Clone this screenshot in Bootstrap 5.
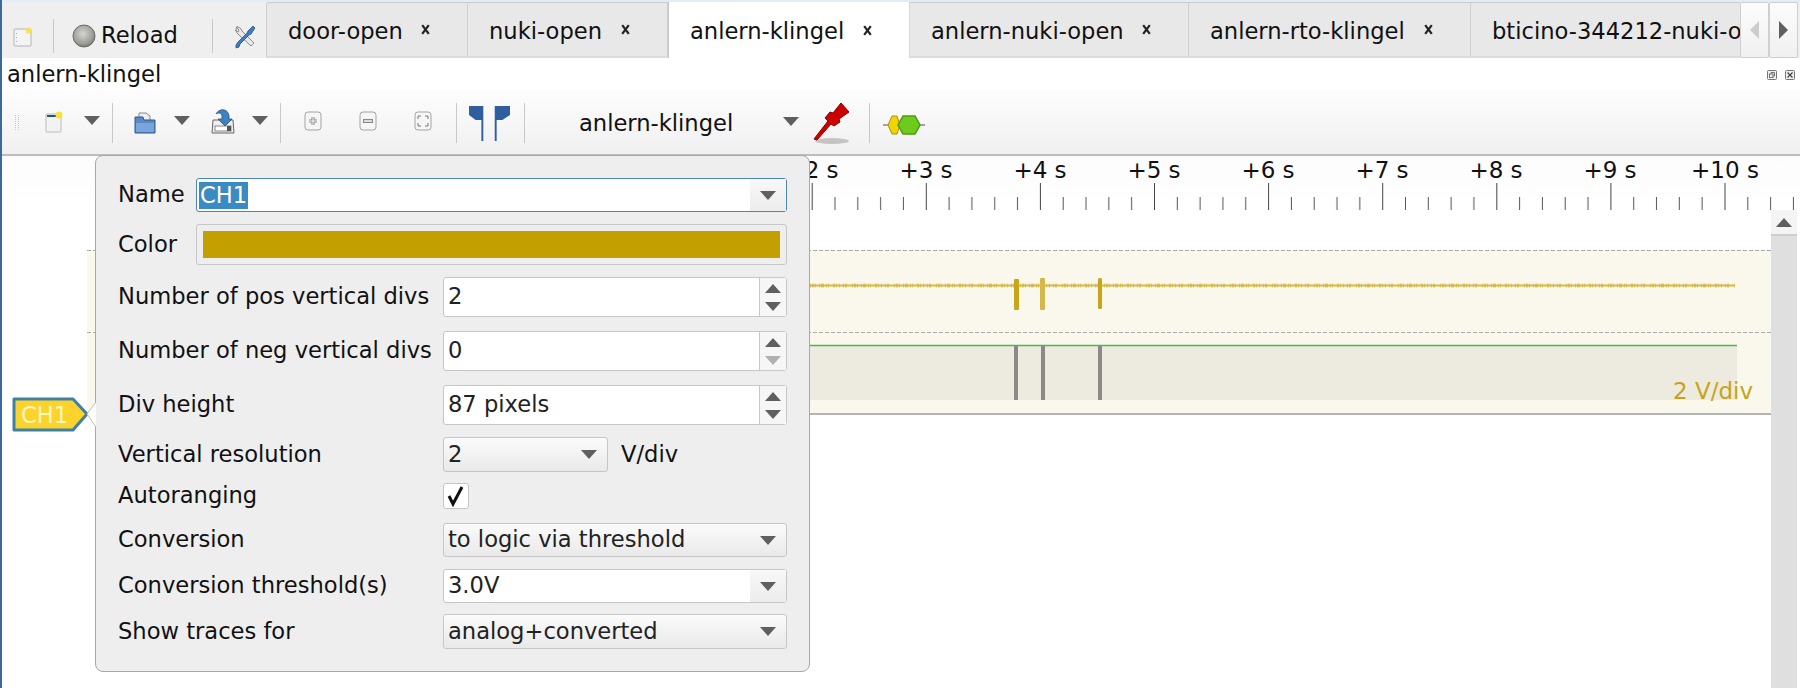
<!DOCTYPE html>
<html lang="en">
<head>
<meta charset="utf-8">
<title>anlern-klingel</title>
<link href="https://cdn.jsdelivr.net/npm/bootstrap@5.3.0/dist/css/bootstrap.min.css" rel="stylesheet">
<script src="https://cdn.jsdelivr.net/npm/bootstrap@5.3.0/dist/js/bootstrap.bundle.min.js"></script>
<style>
html,body{height:688px;overflow:hidden}
body{font-family:"DejaVu Sans","Liberation Sans",sans-serif;font-size:22.6px;line-height:1.2;color:#111;background:#fff;border-left:2px solid #3b6a98;width:1800px}
svg{display:block;flex:none}
.vsep{width:1px;background:#c8c8c8;flex:none}
.tri{width:0;height:0;flex:none;border-left:8px solid transparent;border-right:8px solid transparent;border-top:9px solid #5f5f5f}
.tri-up{width:0;height:0;border-left:8px solid transparent;border-right:8px solid transparent;border-bottom:9px solid #5f5f5f}
.tri-dn{width:0;height:0;border-left:8px solid transparent;border-right:8px solid transparent;border-top:9px solid #5f5f5f}
.tri-off{border-top-color:#b0b0b0}

.topbar{height:58px;background:#efefef;border-top:2px solid #e3edf5}
.tb-new{margin-left:11px;margin-top:25px}
.tb-sep1{height:34px;margin-left:21px;margin-top:17px}
.tb-reload{margin-left:18px;margin-top:22px}
.tb-label{margin-left:5px;margin-top:20px;line-height:26px;width:76px;white-space:nowrap}
.tb-sep2{height:34px;margin-left:35px;margin-top:17px}
.tb-tools{margin-left:21px;margin-top:23px}
.tabstrip{margin-left:10px;width:1474px;height:56px;overflow:hidden;flex:none}
.tabitem{flex:none;height:56px;padding-left:21px;background:#e8e8e8;border-top:1px solid #c4ccd2;border-right:1px solid #cfcfcf;border-bottom:2px solid #dcdcdc;line-height:57px;white-space:nowrap}
.tabitem:first-child{border-left:1px solid #cfcfcf;border-top-left-radius:3px}
.tabitem.on{background:#fff;margin-top:-2px;height:59px;line-height:60px;border-left:1px solid #c8c8c8;border-right:1px solid #d8d8d8;border-bottom:0;border-top:1px solid #bcc8d2;border-radius:3px 3px 0 0;position:relative;z-index:1}
.tab-x{margin-left:auto;margin-right:36px}
.tw1{width:202px}.tw2{width:200px}.tw3{width:242px}.tw4{width:279px}.tw5{width:282px}
.scrollbtn{width:29px;height:56px;background:linear-gradient(#fcfcfc,#f0f0f0);border:1px solid #cfcfcf;border-radius:2px}
.tabr{width:0;height:0;border-top:9px solid transparent;border-bottom:9px solid transparent;border-left:9px solid #5f5f5f}
.tabl{width:0;height:0;border-top:9px solid transparent;border-bottom:9px solid transparent;border-right:9px solid #cdcdcd}

.titlerow{height:32px;padding-left:5px;background:#fff;line-height:32px}
.floatbtns{margin-right:5px;margin-top:12px}

.toolrow{height:66px;background:linear-gradient(#fdfdfd,#f0f0f0);border-bottom:2px solid #bdbdbd}
.toolrow .vsep{height:40px;margin-top:13px}
.m1{margin-left:13px;margin-top:25px}
.m2{margin-left:25px;margin-top:21px}
.m2b{margin-left:21px;margin-top:21px}
.m3{margin-left:21px;margin-top:26px}
.m6{margin-left:18px;margin-top:26px}
.m7{margin-left:21px;margin-top:18px}
.m8{margin-left:17px;margin-top:26px}
.m9{margin-left:23px;margin-top:21px}
.m10{margin-left:37px;margin-top:21px}
.m11{margin-left:12px;margin-top:15px}
.m12{margin-left:54px;line-height:36px;margin-top:15px;width:155px;white-space:nowrap}
.m13{margin-left:49px;margin-top:27px}
.m14{margin-left:14px;margin-top:10px}
.m15{margin-left:13px;margin-top:24px}
.s1{margin-left:12px}.s2{margin-left:12px}.s3{margin-left:24px}.s4{margin-left:14px}.s5{margin-left:18px}

.mainarea{height:532px;position:relative}
.rulerbox{height:54px;background:linear-gradient(#fcfcfc,#fff)}
.bodyrow{height:478px}
.tracecol{width:1769px;flex:none}
.plotgap{height:40px}
.plotbox{height:165px;position:relative;margin-left:85px;background:#faf8ec;border-bottom:2px solid #b4b4b4}
.vdiv{position:absolute;left:1586px;top:128px;color:#c8a415;line-height:26px;font-size:23px;white-space:nowrap}
.vscroll{width:26px;flex:none;background:#dfdfdf}
.vscroll-up{height:26px;background:#f4f4f4;border-bottom:2px solid #cfcfcf}

.tagbox{position:absolute;left:10px;top:241px}
.popup{position:absolute;left:93px;top:-1px;width:715px;height:517px;background:#eee;border:1px solid #a8a8a8;border-radius:8px;padding:22px 22px 0 22px;z-index:2}
.tip{position:absolute;left:-10px;top:246px}
.frow{display:flex;align-items:center}
.flabel{white-space:nowrap;flex:none}
.w-name{width:78px}
.w-long{width:325px}
.box{flex:1 1 auto;align-self:stretch;display:flex;align-items:center;padding:0 0 0 4px;border:1px solid #c6c6c6;border-radius:3px;background:#fff;color:#222;font-size:22.6px;line-height:1.2;min-width:0;white-space:nowrap}
.r1{height:34px;margin-bottom:12px}
.r2{height:41px;margin-bottom:12px}
.r3{height:40px;margin-bottom:14px}
.r3b{height:40px;margin-bottom:12px}
.r4{height:35px;margin-bottom:11px}
.r5{height:26px;margin-bottom:14px}
.r6{height:34px;margin-bottom:12px}
.r7{height:34px;margin-bottom:11px}
.r8{height:35px}
.focusbox{border-color:#4a86ad;padding-left:2px}
.selbit{background:#3a8ac4;color:#fff;padding:0 1px;height:27px;line-height:27px}
.dropcell{margin-left:auto;width:36px;align-self:stretch;display:flex;align-items:center;justify-content:center;background:linear-gradient(#f8f8f8,#ececec)}
.colorbox{padding:6px;background:#eee;align-items:stretch}
.swatch{background:#c49f00;flex:1}
.spinbtns{margin-left:auto;width:27px;align-self:stretch;border-left:1px solid #c6c6c6;background:#f6f6f6;display:flex;flex-direction:column;align-items:center;justify-content:center;gap:9px}
.combo{background:linear-gradient(#fbfbfb,#e9e9e9)}
.combo-end{margin-left:auto;margin-right:10px}
.combo-short{flex:none;width:165px}
.unit{margin-left:13px}
.checkbox-x{flex:none;width:26px;padding:0;background:#fff;justify-content:center}
</style>
</head>
<body>

<div class="topbar d-flex">
  <svg class="tb-new" width="19" height="20" viewBox="0 0 19 20"><rect x="1" y="2" width="17" height="17" rx="1" fill="#f4f4f4" stroke="#b4b4b4"/><circle cx="15.500" cy="3.500" r="3" fill="#f6e05c"/><path d="M3.500 6v1M3.500 10v1M3.500 14v1" stroke="#aaa"/></svg>
  <div class="vsep tb-sep1"></div>
  <svg class="tb-reload" width="24" height="24" viewBox="0 0 24 24"><defs><radialGradient id="rg" cx=".45" cy=".4" r=".65"><stop offset="0" stop-color="#d6d6d0"/><stop offset=".7" stop-color="#9c9c98"/><stop offset="1" stop-color="#6c6c68"/></radialGradient></defs><circle cx="12" cy="12" r="11" fill="url(#rg)" stroke="#6a6a68"/></svg>
  <div class="tb-label">Reload</div>
  <div class="vsep tb-sep2"></div>
  <svg class="tb-tools" width="22" height="24" viewBox="0 0 22 24"><path d="M3 2a5 5 0 0 0 1 7l13 12 3-3L8 6a5 5 0 0 0-6-4l3 3-1 2-3-2" fill="#e8e8e8" stroke="#8a8a8a"/><path d="M19 1l2 2-4 6-2 1-9 9-1 3-3 1 0-3 2-3 9-9 1-2z" fill="#3f7cc0" stroke="#24507f" stroke-width=".8"/></svg>
  <div class="tabstrip d-flex">
    <div class="tabitem tw1 d-flex"><span>door-open</span><svg class="tab-x align-self-center" width="11" height="11" viewBox="0 0 10 10"><path d="M2 1l6 8M8 1L2 9" stroke="#222" stroke-width="2"/></svg></div>
    <div class="tabitem tw2 d-flex"><span>nuki-open</span><svg class="tab-x align-self-center" width="11" height="11" viewBox="0 0 10 10"><path d="M2 1l6 8M8 1L2 9" stroke="#222" stroke-width="2"/></svg></div>
    <div class="tabitem on tw3 d-flex"><span>anlern-klingel</span><svg class="tab-x align-self-center" width="11" height="11" viewBox="0 0 10 10"><path d="M2 1l6 8M8 1L2 9" stroke="#222" stroke-width="2"/></svg></div>
    <div class="tabitem tw4 d-flex"><span>anlern-nuki-open</span><svg class="tab-x align-self-center" width="11" height="11" viewBox="0 0 10 10"><path d="M2 1l6 8M8 1L2 9" stroke="#222" stroke-width="2"/></svg></div>
    <div class="tabitem tw5 d-flex"><span>anlern-rto-klingel</span><svg class="tab-x align-self-center" width="11" height="11" viewBox="0 0 10 10"><path d="M2 1l6 8M8 1L2 9" stroke="#222" stroke-width="2"/></svg></div>
    <div class="tabitem d-flex"><span>bticino-344212-nuki-open</span></div>
  </div>
  <div class="scrollbtn d-flex align-items-center justify-content-center"><div class="tabl"></div></div>
  <div class="scrollbtn d-flex align-items-center justify-content-center"><div class="tabr"></div></div>
</div>

<div class="titlerow d-flex justify-content-between">
  <span>anlern-klingel</span>
  <div class="floatbtns d-flex gap-2">
    <svg width="10" height="10" viewBox="0 0 10 10"><rect x=".5" y=".5" width="9" height="9" rx="1" fill="#eee" stroke="#777"/><rect x="2.500" y="4" width="3.500" height="3.500" fill="none" stroke="#777"/><path d="M4 4V2.500h3.500V6H6" fill="none" stroke="#777"/></svg>
    <svg width="10" height="10" viewBox="0 0 10 10"><rect x=".5" y=".5" width="9" height="9" rx="1" fill="#eee" stroke="#777"/><path d="M2.500 2.500l5 5M7.500 2.500l-5 5" stroke="#444" stroke-width="1.200"/></svg>
  </div>
</div>

<div class="toolrow d-flex">
  <svg class="m1" width="5" height="16" viewBox="0 0 5 16"><path d="M.5 0v16M3.500 0v16" stroke="#c4c4c4" stroke-dasharray="1 1"/></svg>
  <svg class="m2" width="18" height="22" viewBox="0 0 18 22"><rect x="1" y="3" width="15" height="18" rx="1" fill="#f2f2f2" stroke="#bdbdbd"/><rect x="2" y="4" width="12" height="2" fill="#27508a"/><circle cx="14" cy="4" r="3.500" fill="#f5e23a"/></svg>
  <div class="tri m3"></div>
  <div class="vsep s1"></div>
  <svg class="m2b" width="22" height="24" viewBox="0 0 22 24"><path d="M5 9V2h7l4 3v5z" fill="#eee" stroke="#888"/><path d="M1 6h8l1 3h11v13H1z" fill="#5c89c4" stroke="#2d5a92"/><rect x="2" y="12" width="18" height="9" fill="#7aa5da"/></svg>
  <div class="tri m6"></div>
  <svg class="m7" width="24" height="26" viewBox="0 0 24 26"><path d="M2 12h20l1 13H1z" fill="#eee" stroke="#666"/><rect x="4" y="18" width="16" height="5" fill="#fff" stroke="#888"/><rect x="16" y="18" width="4" height="5" fill="#555"/><path d="M5 6c3-6 12-6 13 2v3h3l-7 7-7-7h4V8c0-3-4-4-6-2z" fill="#3e82c0" stroke="#24507f" stroke-width=".8"/></svg>
  <div class="tri m8"></div>
  <div class="vsep s2"></div>
  <svg class="m9" width="18" height="20" viewBox="0 0 18 20"><rect x="1" y="1" width="16" height="18" rx="3" fill="#f6f6f6" stroke="#a4a4a4"/><path d="M9 6v8M5 10h8" stroke="#888" stroke-width="3"/><path d="M9 6v8M5 10h8" stroke="#fff" stroke-width="1"/></svg>
  <svg class="m10" width="18" height="20" viewBox="0 0 18 20"><rect x="1" y="1" width="16" height="18" rx="3" fill="#f6f6f6" stroke="#a4a4a4"/><rect x="4.500" y="8.500" width="9" height="3" fill="#ddd" stroke="#888"/></svg>
  <svg class="m10" width="18" height="20" viewBox="0 0 18 20"><rect x="1" y="1" width="16" height="18" rx="3" fill="#f6f6f6" stroke="#a4a4a4"/><path d="M4 8V5h3M14 8V5h-3M4 12v3h3M14 12v3h-3" fill="none" stroke="#777"/></svg>
  <div class="vsep s3"></div>
  <svg class="m11" width="41" height="36" viewBox="0 0 43 36" preserveAspectRatio="none"><path d="M0 1h15v35h-2V15l-6 0-7-5z" fill="#2f5f9e"/><path d="M43 1H27v35h2V15l6 0 8-5z" fill="#2f5f9e"/></svg>
  <div class="vsep s4"></div>
  <div class="m12">anlern-klingel</div>
  <div class="tri m13"></div>
  <svg class="m14" width="38" height="46" viewBox="0 0 38 46"><ellipse cx="19" cy="41" rx="17" ry="3" fill="#c4c4c4"/><path d="M1 39L15 21l-3-3 5-6 3 1 8-10 8 9-10 7 1 3-6 4-3-2L4 40z" fill="#c00" stroke="#8a0000"/></svg>
  <div class="vsep s5"></div>
  <svg class="m15" width="42" height="22" viewBox="0 0 42 22"><path d="M0 11h5M37 11h5" stroke="#888" stroke-width="1.500"/><path d="M5 11l4-9h5l3 9-3 9H9z" fill="#f2d500" stroke="#a88f10"/><path d="M15 11l5-9h12l5 9-5 9H20z" fill="#6ecb1e" stroke="#4f9a14" stroke-width="1.500"/></svg>
</div>

<div class="mainarea">
  <div class="rulerbox">
    <svg width="1798" height="54" viewBox="0 0 1798 54">
      <defs>
        <pattern id="tk" x="809.700" y="0" width="114.100" height="54" patternUnits="userSpaceOnUse">
          <path d="M.5 27v27" stroke="#444"/>
          <path d="M23.300 41v13M46.100 41v13M68.900 41v13M91.700 41v13" stroke="#555"/>
        </pattern>
      </defs>
      <rect x="798" width="1000" height="54" fill="url(#tk)"/>
      <g font-family="DejaVu Sans, sans-serif" font-size="23" fill="#111" text-anchor="middle">
        <text x="810" y="22">+2 s</text>
        <text x="924" y="22">+3 s</text>
        <text x="1038" y="22">+4 s</text>
        <text x="1152" y="22">+5 s</text>
        <text x="1266" y="22">+6 s</text>
        <text x="1380" y="22">+7 s</text>
        <text x="1494" y="22">+8 s</text>
        <text x="1608" y="22">+9 s</text>
        <text x="1723" y="22">+10 s</text>
      </g>
    </svg>
  </div>
  <div class="d-flex bodyrow">
    <div class="tracecol">
      <div class="plotgap"></div>
      <div class="plotbox">
        <svg width="1684" height="163" viewBox="0 0 1684 163">
          <path d="M0 .5H1684M0 82.500H1684" stroke="#aaa" stroke-dasharray="4 2"/>
          <path d="M723 35.500H1648" stroke="#d8b93c" stroke-width="2"/>
          <path d="M723 35.500H1648" stroke="#d4b12c" stroke-width="4" opacity=".6" stroke-dasharray="1 1 2 1 1 3 1 1 3 2 1 1 1 4 2 1 1 2 1 3 1 1 2 5"/>
          <rect x="720" y="96" width="930" height="54" fill="#edebe0"/>
          <path d="M720 95.500H1650" stroke="#45bd45" stroke-width="1.500"/>
          <g fill="#c9a51a"><rect x="927" y="29" width="5" height="31" rx="1"/><rect x="953" y="28" width="5" height="32" rx="1" fill="#d4b84a"/><rect x="1011" y="28" width="4" height="31" rx="1.500"/></g>
          <g fill="#8a8a86"><rect x="927" y="96" width="4" height="54"/><rect x="954" y="96" width="4" height="54"/><rect x="1011" y="96" width="4" height="54"/></g>
        </svg>
        <div class="vdiv">2 V/div</div>
      </div>
    </div>
    <div class="vscroll">
      <div class="vscroll-up d-flex align-items-center justify-content-center"><div class="tri-up"></div></div>
    </div>
  </div>

  <svg class="tagbox" width="78" height="36" viewBox="0 0 78 36">
    <path d="M2 2H61L75 17 61 33H2z" fill="#fcd22c" stroke="#3f81a6" stroke-width="3" stroke-linejoin="round"/>
    <text x="9" y="26" font-family="DejaVu Sans, sans-serif" font-size="22.600" fill="#fff7b8">CH1</text>
  </svg>

  <div class="popup">
    <svg class="tip" width="11" height="26" viewBox="0 0 11 26"><path d="M10 0L1 12 10 25z" fill="#fff"/><path d="M10 0L1 12 10 25" fill="none" stroke="#bbb"/></svg>
    <div class="frow r1"><div class="flabel w-name">Name</div><div class="box focusbox"><span class="selbit">CH1</span><div class="dropcell"><div class="tri"></div></div></div></div>
    <div class="frow r2"><div class="flabel w-name">Color</div><div class="box colorbox"><div class="swatch"></div></div></div>
    <div class="frow r3"><div class="flabel w-long">Number of pos vertical divs</div><div class="box"><span>2</span><div class="spinbtns"><div class="tri-up"></div><div class="tri-dn"></div></div></div></div>
    <div class="frow r3"><div class="flabel w-long">Number of neg vertical divs</div><div class="box"><span>0</span><div class="spinbtns"><div class="tri-up"></div><div class="tri-dn tri-off"></div></div></div></div>
    <div class="frow r3b"><div class="flabel w-long">Div height</div><div class="box"><span>87 pixels</span><div class="spinbtns"><div class="tri-up"></div><div class="tri-dn"></div></div></div></div>
    <div class="frow r4"><div class="flabel w-long">Vertical resolution</div><div class="box combo combo-short"><span>2</span><div class="tri combo-end"></div></div><span class="unit">V/div</span></div>
    <div class="frow r5"><div class="flabel w-long">Autoranging</div><div class="box checkbox-x"><svg width="20" height="22" viewBox="0 0 20 22"><path d="M3 11l4 8L16 2" fill="none" stroke="#111" stroke-width="3"/></svg></div></div>
    <div class="frow r6"><div class="flabel w-long">Conversion</div><div class="box combo"><span>to logic via threshold</span><div class="tri combo-end"></div></div></div>
    <div class="frow r7"><div class="flabel w-long">Conversion threshold(s)</div><div class="box"><span>3.0V</span><div class="dropcell"><div class="tri"></div></div></div></div>
    <div class="frow r8"><div class="flabel w-long">Show traces for</div><div class="box combo"><span>analog+converted</span><div class="tri combo-end"></div></div></div>
  </div>
</div>

</body>
</html>
